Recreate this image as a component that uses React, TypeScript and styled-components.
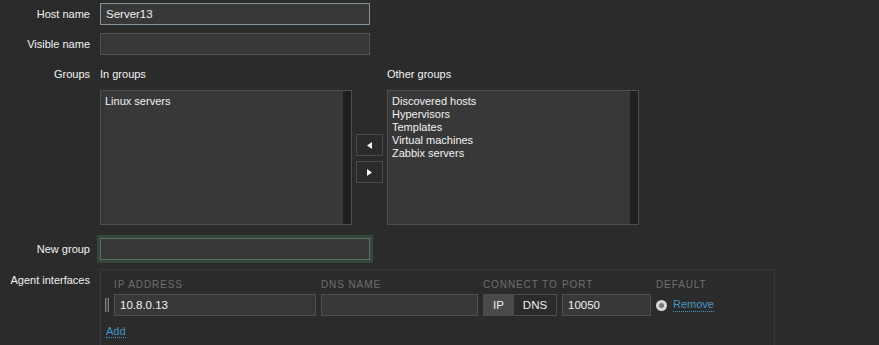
import React from "react";
import styled, { createGlobalStyle } from "styled-components";

const GlobalStyle = createGlobalStyle`
  html, body {
    margin: 0;
    padding: 0;
    background: #2b2b2b;
  }
  body {
    font-family: "Liberation Sans", Arial, sans-serif;
    font-size: 11px;
    color: #f2f2f2;
  }
`;

const inGroups = ["Linux servers"];
const otherGroups = [
  "Discovered hosts",
  "Hypervisors",
  "Templates",
  "Virtual machines",
  "Zabbix servers",
];

const Form = styled.form`
  display: flex;
  flex-direction: column;
  padding-top: 3px;
  width: 879px;
  height: 345px;
  overflow: hidden;
`;

const Row = styled.div<{ $gap?: number }>`
  display: grid;
  grid-template-columns: 90px 1fr;
  column-gap: 10px;
  margin-bottom: ${({ $gap }) => $gap ?? 8}px;
`;

const Label = styled.label`
  text-align: right;
  line-height: 22px;
  color: #f2f2f2;
`;

const TextInput = styled.input<{ $width: number; $state?: "focus" | "glow" }>`
  box-sizing: border-box;
  width: ${({ $width }) => $width}px;
  height: 22px;
  padding: 0 5px;
  margin: 0;
  background: #383838;
  border: 1px solid
    ${({ $state }) =>
      $state === "focus" ? "#8595a0" : $state === "glow" ? "#56705f" : "#4f4f4f"};
  box-shadow: ${({ $state }) =>
    $state === "glow" ? "0 0 0 3px rgba(72, 104, 84, 0.45)" : "none"};
  color: #f2f2f2;
  font-family: inherit;
  font-size: 11.5px;
  outline: none;
`;

const GroupsArea = styled.div`
  display: flex;
  align-items: flex-start;
`;

const GroupColumn = styled.div`
  display: flex;
  flex-direction: column;
`;

const ColumnTitle = styled.div`
  line-height: 22px;
  margin-bottom: 5px;
`;

const ListBox = styled.div`
  box-sizing: border-box;
  width: 252px;
  height: 135px;
  display: flex;
  background: #383838;
  border: 1px solid #4f4f4f;
`;

const ListItems = styled.ul`
  flex: 1;
  list-style: none;
  margin: 0;
  padding: 4px 4px;
`;

const ListItem = styled.li`
  line-height: 13px;
  color: #f2f2f2;
`;

const ScrollTrack = styled.div`
  width: 8px;
  background: #1f1f1f;
`;

const MoveButtons = styled.div`
  display: flex;
  flex-direction: column;
  gap: 5px;
  margin: 71px 4px 0;
`;

const MoveButton = styled.button`
  box-sizing: border-box;
  width: 27px;
  height: 22px;
  padding: 0;
  display: flex;
  align-items: center;
  justify-content: center;
  background: #2b2b2b;
  border: 1px solid #4a4a4a;
  cursor: pointer;
`;

const InterfacesPanel = styled.div`
  box-sizing: border-box;
  width: 675px;
  height: 90px;
  border: 1px solid #383838;
  padding: 5px 0 0 4px;
`;

const InterfaceGrid = styled.div`
  display: grid;
  grid-template-columns: 4px 202px 157px 74px 89px auto;
  column-gap: 5px;
  align-items: center;
`;

const HeaderCell = styled.div`
  line-height: 19px;
  font-size: 10px;
  letter-spacing: 0.9px;
  text-transform: uppercase;
  color: #6f6f6f;
  white-space: nowrap;
`;

const HandleBox = styled.div`
  display: flex;
  align-items: center;
  height: 22px;
`;

const Segmented = styled.div`
  display: flex;
  height: 22px;
`;

const SegmentButton = styled.button<{ $active?: boolean; $width: number }>`
  box-sizing: border-box;
  width: ${({ $width }) => $width}px;
  height: 22px;
  padding: 0;
  margin: 0;
  font-family: inherit;
  font-size: 11.5px;
  color: #f2f2f2;
  background: ${({ $active }) => ($active ? "#4a4a4a" : "#2b2b2b")};
  border: 1px solid ${({ $active }) => ($active ? "#4a4a4a" : "#4f4f4f")};
  border-left-width: ${({ $active }) => ($active ? 1 : 0)}px;
`;

const DefaultCell = styled.div`
  display: flex;
  align-items: center;
  gap: 6px;
`;

const Radio = styled.span`
  box-sizing: border-box;
  width: 11px;
  height: 11px;
  border-radius: 50%;
  background: #d8d8d8;
  display: flex;
  align-items: center;
  justify-content: center;

  &::after {
    content: "";
    width: 5px;
    height: 5px;
    border-radius: 50%;
    background: #777;
  }
`;

const Link = styled.a`
  color: #4796c4;
  text-decoration: none;
  border-bottom: 1px dotted #4796c4;
  line-height: 13px;
  cursor: pointer;
`;

const AddRow = styled.div`
  padding: 9px 0 0 1px;
`;

const Triangle: React.FC<{ dir: "left" | "right" }> = ({ dir }) => (
  <svg width="5" height="7" viewBox="0 0 5 7">
    <polygon
      points={dir === "left" ? "5,0 5,7 0,3.5" : "0,0 0,7 5,3.5"}
      fill="#f2f2f2"
    />
  </svg>
);

const DragDots: React.FC = () => (
  <svg width="6" height="20" viewBox="0 0 6 20">
    {Array.from({ length: 7 }).map((_, i) => (
      <React.Fragment key={i}>
        <rect x="0" y={i * 3} width="2" height="2" fill="#a9a9a9" />
        <rect x="4" y={i * 3} width="2" height="2" fill="#a9a9a9" />
      </React.Fragment>
    ))}
  </svg>
);

const App: React.FC = () => {
  return (
    <>
      <GlobalStyle />
      <Form onSubmit={(e) => e.preventDefault()}>
        <Row>
          <Label>Host name</Label>
          <TextInput $width={270} $state="focus" defaultValue="Server13" />
        </Row>
        <Row>
          <Label>Visible name</Label>
          <TextInput $width={270} />
        </Row>
        <Row $gap={13}>
          <Label>Groups</Label>
          <GroupsArea>
            <GroupColumn>
              <ColumnTitle>In groups</ColumnTitle>
              <ListBox>
                <ListItems>
                  {inGroups.map((g) => (
                    <ListItem key={g}>{g}</ListItem>
                  ))}
                </ListItems>
                <ScrollTrack />
              </ListBox>
            </GroupColumn>
            <MoveButtons>
              <MoveButton type="button">
                <Triangle dir="left" />
              </MoveButton>
              <MoveButton type="button">
                <Triangle dir="right" />
              </MoveButton>
            </MoveButtons>
            <GroupColumn>
              <ColumnTitle>Other groups</ColumnTitle>
              <ListBox>
                <ListItems>
                  {otherGroups.map((g) => (
                    <ListItem key={g}>{g}</ListItem>
                  ))}
                </ListItems>
                <ScrollTrack />
              </ListBox>
            </GroupColumn>
          </GroupsArea>
        </Row>
        <Row $gap={9}>
          <Label>New group</Label>
          <TextInput $width={270} $state="glow" />
        </Row>
        <Row>
          <Label>Agent interfaces</Label>
          <InterfacesPanel>
            <InterfaceGrid>
              <span />
              <HeaderCell>IP address</HeaderCell>
              <HeaderCell>DNS name</HeaderCell>
              <HeaderCell>Connect to</HeaderCell>
              <HeaderCell>Port</HeaderCell>
              <HeaderCell>Default</HeaderCell>

              <HandleBox>
                <DragDots />
              </HandleBox>
              <TextInput $width={202} defaultValue="10.8.0.13" />
              <TextInput $width={157} />
              <Segmented>
                <SegmentButton type="button" $active $width={31}>
                  IP
                </SegmentButton>
                <SegmentButton type="button" $width={43}>
                  DNS
                </SegmentButton>
              </Segmented>
              <TextInput $width={89} defaultValue="10050" />
              <DefaultCell>
                <Radio />
                <Link>Remove</Link>
              </DefaultCell>
            </InterfaceGrid>
            <AddRow>
              <Link>Add</Link>
            </AddRow>
          </InterfacesPanel>
        </Row>
      </Form>
    </>
  );
};

export default App;
